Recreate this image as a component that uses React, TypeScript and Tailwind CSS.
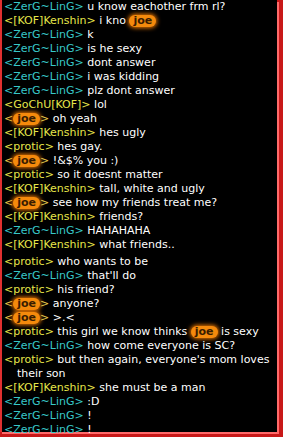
import React from "react";

type Part = string | { joe: true };

interface Line {
  nick: string;
  color: "cyan" | "yellow" | "joe";
  msg: Part[];
  gapTop?: boolean;
}

const lines: Line[] = [
  { nick: "ZerG~LinG", color: "cyan", msg: ["u know eachother frm rl?"] },
  { nick: "[KOF]Kenshin", color: "yellow", msg: ["i kno ", { joe: true }] },
  { nick: "ZerG~LinG", color: "cyan", msg: ["k"] },
  { nick: "ZerG~LinG", color: "cyan", msg: ["is he sexy"] },
  { nick: "ZerG~LinG", color: "cyan", msg: ["dont answer"] },
  { nick: "ZerG~LinG", color: "cyan", msg: ["i was kidding"] },
  { nick: "ZerG~LinG", color: "cyan", msg: ["plz dont answer"] },
  { nick: "GoChU[KOF]", color: "yellow", msg: ["lol"] },
  { nick: "joe", color: "joe", msg: ["oh yeah"] },
  { nick: "[KOF]Kenshin", color: "yellow", msg: ["hes ugly"] },
  { nick: "protic", color: "yellow", msg: ["hes gay."] },
  { nick: "joe", color: "joe", msg: ["!&$% you :)"] },
  { nick: "protic", color: "yellow", msg: ["so it doesnt matter"] },
  { nick: "[KOF]Kenshin", color: "yellow", msg: ["tall, white and ugly"] },
  { nick: "joe", color: "joe", msg: ["see how my friends treat me?"] },
  { nick: "[KOF]Kenshin", color: "yellow", msg: ["friends?"] },
  { nick: "ZerG~LinG", color: "cyan", msg: ["HAHAHAHA"] },
  { nick: "[KOF]Kenshin", color: "yellow", msg: ["what friends.."] },
  { nick: "protic", color: "yellow", msg: ["who wants to be"], gapTop: true },
  { nick: "ZerG~LinG", color: "cyan", msg: ["that'll do"] },
  { nick: "protic", color: "yellow", msg: ["his friend?"] },
  { nick: "joe", color: "joe", msg: ["anyone?"] },
  { nick: "joe", color: "joe", msg: [">.<"] },
  { nick: "protic", color: "yellow", msg: ["this girl we know thinks ", { joe: true }, " is sexy"] },
  { nick: "ZerG~LinG", color: "cyan", msg: ["how come everyone is SC?"] },
  { nick: "protic", color: "yellow", msg: ["but then again, everyone's mom loves"] },
  { nick: "", color: "yellow", msg: ["their son"] },
  { nick: "[KOF]Kenshin", color: "yellow", msg: ["she must be a man"] },
  { nick: "ZerG~LinG", color: "cyan", msg: [":D"] },
  { nick: "ZerG~LinG", color: "cyan", msg: ["!"] },
  { nick: "ZerG~LinG", color: "cyan", msg: ["!"] },
];

// orange glowing highlight used wherever "joe" shows up
function Joe() {
  return (
    <span className="inline-block rounded-full bg-[#f58a0c] px-[4px] leading-[12px] font-bold text-[#3a1c00] shadow-[0_0_4px_1px_#f07a00]">
      joe
    </span>
  );
}

function ChatLine({ line }: { line: Line }) {
  const nickColor =
    line.color === "cyan" ? "text-[#38c8c8]" : "text-[#e6e64a]";
  if (!line.nick) {
    return <div className="h-[14px] pl-[13px] text-white">{line.msg as string[]}</div>;
  }
  return (
    <div className={`h-[14px] whitespace-nowrap ${line.gapTop ? "mt-[3px]" : ""}`}>
      {line.color === "joe" ? (
        <span className="text-[#e6c84a]">
          &lt;<Joe />&gt;
        </span>
      ) : (
        <span className={nickColor}>&lt;{line.nick}&gt;</span>
      )}{" "}
      <span className="text-white">
        {line.msg.map((p, i) => (typeof p === "string" ? <span key={i}>{p}</span> : <Joe key={i} />))}
      </span>
    </div>
  );
}

export default function App() {
  return (
    <div className="h-[437px] w-[283px] overflow-hidden bg-[#c81818]">
      <div className="h-[432px] w-[277px] border-l-2 border-[#e03030] bg-black shadow-[2px_2px_0_0_#ff6a6a]">
        <div
          className="pl-[2px] pt-0 text-[11px] leading-[14px]"
          style={{ fontFamily: '"DejaVu Sans", Verdana, sans-serif' }}
        >
          {lines.map((l, i) => (
            <ChatLine key={i} line={l} />
          ))}
        </div>
      </div>
    </div>
  );
}
